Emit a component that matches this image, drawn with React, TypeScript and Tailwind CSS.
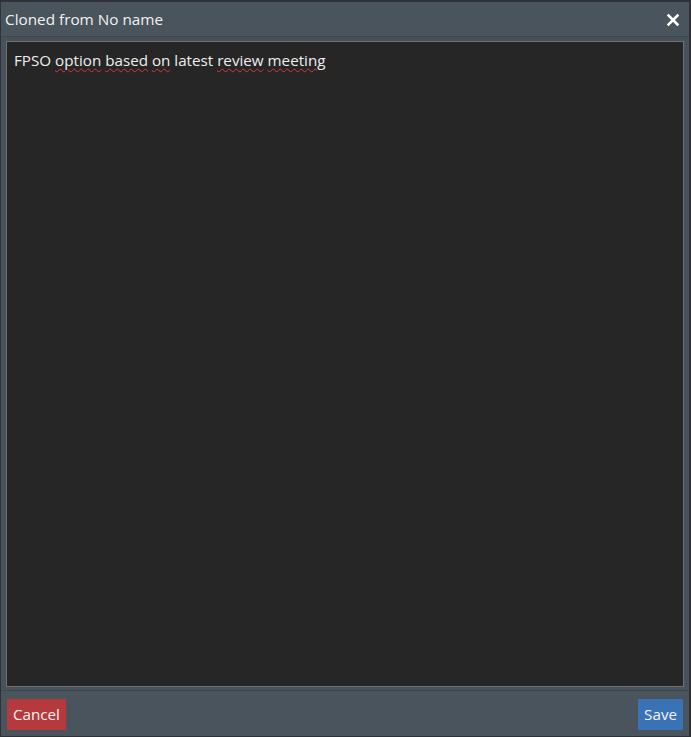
import React from "react";

export default function App() {
  return (
    <div
      className="w-[691px] h-[737px] flex flex-col bg-[#2e3236] pt-[2px] pl-[1px] pr-[2px] pb-[1px]"
      style={{ fontFamily: '"Open Sans", "Noto Sans", sans-serif' }}
    >
      <div className="h-[35px] flex items-center justify-between bg-[#4a545c] pl-[4px] pr-[10px] pt-[1px] border-b border-[#3d454c]">
        <span className="text-[15.3px] text-[#f2f2f2] leading-none">Cloned from No name</span>
        <svg width="12" height="12" viewBox="0 0 12 12">
          <path d="M1.5 1.5 L10.5 10.5 M10.5 1.5 L1.5 10.5" stroke="#ffffff" strokeWidth="2.6" strokeLinecap="square" />
        </svg>
      </div>
      <div className="flex-1 flex flex-col bg-[#48525a] px-[5px] pt-[4px] pb-[3px]">
        <div className="flex-1 bg-[#262626] border border-[#6e7174] px-[7px] py-[6px]">
          <span className="text-[15.2px] text-[#eeeeee]">
            FPSO{" "}
            <span className="underline decoration-wavy decoration-[#d23a3a] decoration-1 underline-offset-2">option</span>{" "}
            <span className="underline decoration-wavy decoration-[#d23a3a] decoration-1 underline-offset-2">based</span>{" "}
            <span className="underline decoration-wavy decoration-[#d23a3a] decoration-1 underline-offset-2">on</span> latest{" "}
            <span className="underline decoration-wavy decoration-[#d23a3a] decoration-1 underline-offset-2">review</span>{" "}
            <span className="underline decoration-wavy decoration-[#d23a3a] decoration-1 underline-offset-2">meeting</span>
          </span>
        </div>
      </div>
      <div className="h-[46px] flex items-center justify-between bg-[#4a545c] border-t border-[#3d454c] pl-[6px] pr-[6px] pt-[2px]">
        <button className="h-[31px] px-[6px] bg-[#b5393d] text-[15.2px] text-[#f4f4f4]">Cancel</button>
        <button className="h-[31px] px-[6px] bg-[#3a73b5] text-[15.2px] text-[#f4f4f4]">Save</button>
      </div>
    </div>
  );
}
